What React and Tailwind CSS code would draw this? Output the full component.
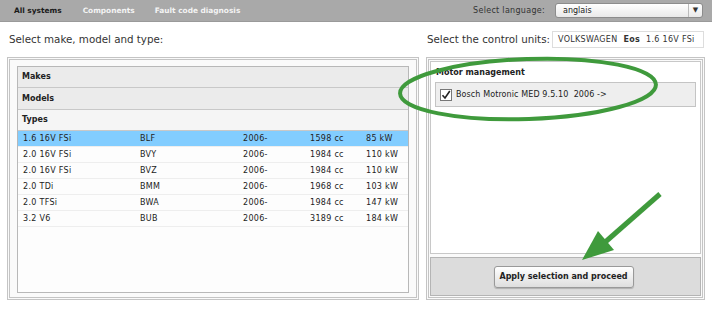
import React from "react";

const types = [
  { name: "1.6 16V FSi", code: "BLF", year: "2006-", cc: "1598 cc", kw: "85 kW" },
  { name: "2.0 16V FSi", code: "BVY", year: "2006-", cc: "1984 cc", kw: "110 kW" },
  { name: "2.0 16V FSi", code: "BVZ", year: "2006-", cc: "1984 cc", kw: "110 kW" },
  { name: "2.0 TDi", code: "BMM", year: "2006-", cc: "1968 cc", kw: "103 kW" },
  { name: "2.0 TFSi", code: "BWA", year: "2006-", cc: "1984 cc", kw: "147 kW" },
  { name: "3.2 V6", code: "BUB", year: "2006-", cc: "3189 cc", kw: "184 kW" },
];

const Frame = ({ children, className = "" }) => (
  <div className={`border-[3px] border-double border-[#c4c4c4] bg-[#fafafa] ${className}`}>{children}</div>
);

export default function App() {
  return (
    <div className="relative h-[309px] w-[712px] overflow-hidden bg-white font-['DejaVu_Sans',sans-serif] text-[#222]">
      {/* top bar */}
      <div className="flex h-[22px] items-center border-b border-[#9a9a9a] bg-[#a9a9a9] text-[7.4px] font-bold">
        <span className="ml-[14px] text-[#1a1a1a]">All systems</span>
        <span className="ml-[21px] text-[#f4f4f4]">Components</span>
        <span className="ml-[20px] text-[#f4f4f4]">Fault code diagnosis</span>
        <span className="ml-auto mr-[10px] text-[8px] font-normal tracking-[0.3px] text-[#333]">Select language:</span>
        <div className="mr-[9px] flex h-[15px] w-[148px] items-center rounded-[3px] border border-[#8c8c8c] bg-gradient-to-b from-white to-[#e9e9e9] font-normal">
          <span className="ml-[7px] flex-1 text-[8px] text-[#222]">anglais</span>
          <span className="flex h-full w-[14px] items-center justify-center border-l border-[#bbb] text-[7px] text-[#333]">▼</span>
        </div>
      </div>

      {/* headings */}
      <div className="flex h-[35px] items-center pl-[9px] pr-[8px]">
        <span className="w-[418px] whitespace-nowrap text-[10.3px] text-[#333]">Select make, model and type:</span>
        <span className="whitespace-nowrap text-[10.3px] text-[#333]">Select the control units:</span>
        <div className="ml-auto flex h-[17px] w-[152px] items-center gap-[6px] whitespace-nowrap border border-[#ddd] bg-white px-[5px] text-[8px] tracking-[0.3px] text-[#333]">
          <span>VOLKSWAGEN</span>
          <span className="font-bold">Eos</span>
          <span>1.6 16V FSi</span>
        </div>
      </div>

      {/* panels */}
      <div className="flex gap-[7px] pl-[7px]">
        <Frame className="h-[243px] w-[412px] px-[7px] pt-[6px]">
          <div className="h-[227px] border border-[#b8b8b8] bg-[#fdfdfd] text-[8px]">
            <div className="flex h-[21px] items-center border-b border-[#c8c8c8] bg-[#ebebeb] pl-[4px] font-bold">Makes</div>
            <div className="flex h-[22px] items-center border-b border-[#c8c8c8] bg-[#ebebeb] pl-[4px] font-bold">Models</div>
            <div className="flex h-[21px] items-center border-b border-[#c8c8c8] bg-[#f5f5f5] pl-[4px] font-bold">Types</div>
            {types.map((t, i) => (
              <div
                key={i}
                className={`grid h-[16px] grid-cols-[117px_103px_67px_56px_1fr] items-center border-b border-[#eeeeee] pl-[5px] tracking-[0.3px] ${
                  i === 0 ? "bg-[#82cdff]" : ""
                }`}
              >
                <span>{t.name}</span>
                <span>{t.code}</span>
                <span>{t.year}</span>
                <span>{t.cc}</span>
                <span>{t.kw}</span>
              </div>
            ))}
          </div>
        </Frame>

        <Frame className="flex h-[243px] w-[279px] flex-col gap-[3px] p-[1px]">
          <div className="h-[195px] border border-[#c8c8c8] bg-white px-[4px] pt-[5px]">
            <div className="pl-[1px] text-[8px] font-bold">Motor management</div>
            <div className="mt-[3px] flex h-[25px] items-center border border-[#c4c4c4] bg-[#eeeeee] pl-[4px] text-[8px] tracking-[0.1px]">
              <span className="flex h-[12px] w-[12px] items-center justify-center border border-[#777] bg-white">
                <svg width="10" height="10" viewBox="0 0 10 10">
                  <path d="M1.5 5.2 L4 8 L8.8 1" fill="none" stroke="#222" strokeWidth="1.6" />
                </svg>
              </span>
              <span className="ml-[4px] whitespace-pre">Bosch Motronic MED 9.5.10  2006 -&gt;</span>
            </div>
          </div>
          <div className="flex h-[39px] items-center justify-center border border-[#b4b4b4] bg-[#dcdcdc]">
            <button className="ml-[-4px] h-[22px] w-[140px] rounded-[3px] border border-[#999] bg-gradient-to-b from-white to-[#dedede] text-[8px] font-bold text-[#222] shadow-[0_1px_1px_rgba(0,0,0,0.2)]">
              Apply selection and proceed
            </button>
          </div>
        </Frame>
      </div>

      {/* green annotations */}
      <svg className="pointer-events-none absolute left-0 top-0" width="712" height="309">
        <ellipse cx="528" cy="89" rx="128" ry="30" fill="none" stroke="#3f9a3c" strokeWidth="4" transform="rotate(-2 528 89)" />
        <line x1="660" y1="194" x2="603" y2="244" stroke="#3f9a3c" strokeWidth="5" />
        <polygon points="582,260 598,231 614,250" fill="#3f9a3c" />
      </svg>
    </div>
  );
}
